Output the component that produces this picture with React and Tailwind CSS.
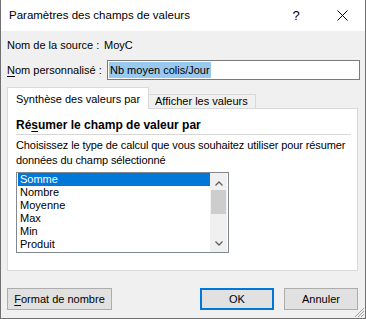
export default function App() {
  const items = ['Somme', 'Nombre', 'Moyenne', 'Max', 'Min', 'Produit']

  return (
    <div className="relative w-[366px] h-[319px] flex flex-col bg-[#f0f0f0] border-x border-b border-[#707070] text-black text-[11px] font-['Liberation_Sans',Arial,sans-serif] overflow-hidden">
      {/* Title bar */}
      <div className="h-[31px] shrink-0 bg-white flex items-center">
        <span className="pl-[8px] text-[11.5px]">Paramètres des champs de valeurs</span>
        <div className="ml-auto flex h-full">
          <div className="w-[46px] flex items-center justify-center text-[13px]">?</div>
          <div className="w-[46px] flex items-center justify-center">
            <svg width="11" height="11" viewBox="0 0 11 11">
              <path d="M0.5 0.5 L10.5 10.5 M10.5 0.5 L0.5 10.5" stroke="#000" strokeWidth="1" fill="none" />
            </svg>
          </div>
        </div>
      </div>

      {/* Body */}
      <div className="flex flex-col pl-[6px]">
        <div className="mt-[6px] h-[16px] flex items-center leading-[16px]">
          <span className="w-[97px]">Nom de la source :</span>
          <span>MoyC</span>
        </div>

        <div className="mt-[7px] h-[20px] flex items-center">
          <span className="w-[100px]">
            <span className="underline underline-offset-2">N</span>om personnalisé :
          </span>
          <div className="w-[253px] h-[20px] border border-[#7a7a7a] bg-white flex items-center pl-[1px]">
            <span className="bg-[#99c9ef] h-[16px] leading-[16px] pl-[1px] pr-[1px]">Nb moyen colis/Jour</span>
          </div>
        </div>

        {/* Tabs */}
        <div className="mt-[7px] h-[21px] flex items-end">
          <div className="relative z-10 w-[142px] h-[22px] -mb-px bg-white border-x border-t border-[#d9d9d9] flex items-start pt-[4px] pl-[8px] leading-[14px]">
            Synthèse des valeurs par
          </div>
          <div className="w-[107px] h-[14px] border-t border-r border-[#d9d9d9] pl-[6px] leading-[13px]">
            Afficher les valeurs
          </div>
        </div>

        {/* Panel */}
        <div className="w-[351px] h-[163px] bg-white border border-[#d9d9d9] flex flex-col pl-[8px]">
          <div className="mt-[8px] h-[16px] leading-[16px] font-bold text-[12px]">
            Ré<span className="underline underline-offset-2">s</span>umer le champ de valeur par
          </div>
          <div className="mt-[1px] w-[335px] h-px bg-[#d7d7d7]" />
          <div className="mt-[3px] leading-[15px] whitespace-nowrap tracking-[-0.1px]">
            Choisissez le type de calcul que vous souhaitez utiliser pour résumer
            <br />
            données du champ sélectionné
          </div>

          {/* Listbox */}
          <div className="mt-[4px] w-[213px] h-[81px] border border-[#828790] bg-white flex">
            <div className="w-[193px] pl-[1px] flex flex-col">
              {items.map((it, i) => (
                <div
                  key={it}
                  className={
                    'h-[13px] leading-[13px] pl-[2px] ' +
                    (i === 0 ? 'bg-[#0078d7] text-white' : '')
                  }
                >
                  {it}
                </div>
              ))}
            </div>
            <div className="w-[17px] bg-[#f0f0f0] flex flex-col items-center">
              <div className="h-[17px] pt-[8px]">
                <svg width="8" height="5" viewBox="0 0 8 5">
                  <path d="M0.5 4.5 L4 1 L7.5 4.5" stroke="#606060" strokeWidth="1.3" fill="none" />
                </svg>
              </div>
              <div className="w-[15px] h-[24px] bg-[#cdcdcd]" />
              <div className="flex-1" />
              <div className="h-[17px] pt-[6px]">
                <svg width="8" height="5" viewBox="0 0 8 5">
                  <path d="M0.5 0.5 L4 4 L7.5 0.5" stroke="#606060" strokeWidth="1.3" fill="none" />
                </svg>
              </div>
            </div>
          </div>
        </div>

        {/* Buttons */}
        <div className="mt-[17px] w-[351px] flex">
          <button className="w-[105px] h-[22px] border border-[#adadad] bg-[#e1e1e1] flex items-center justify-center">
            <span>
              <span className="underline underline-offset-2">F</span>ormat de nombre
            </span>
          </button>
          <button className="ml-auto w-[74px] h-[22px] border-2 border-[#0078d7] bg-[#e1e1e1] flex items-center justify-center">
            OK
          </button>
          <button className="ml-[10px] w-[74px] h-[22px] border border-[#adadad] bg-[#e1e1e1] flex items-center justify-center">
            Annuler
          </button>
        </div>
      </div>

      {/* Resize grip */}
      <svg className="absolute right-0 bottom-0" width="10" height="10" viewBox="0 0 10 10">
        <path d="M9 3 L3 9 M9 6 L6 9 M9 0 L0 9" stroke="#a0a0a0" strokeWidth="1" fill="none" />
      </svg>
    </div>
  )
}
